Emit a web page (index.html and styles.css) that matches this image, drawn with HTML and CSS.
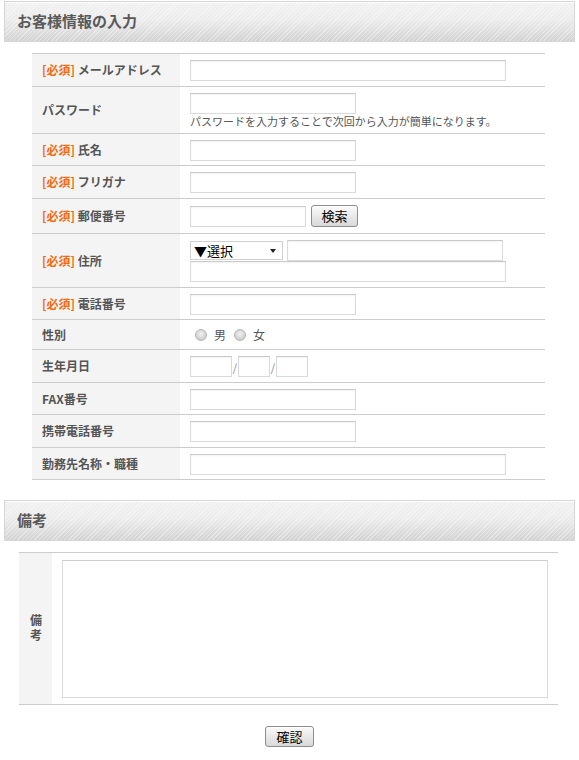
FILE: index.html
```html
<html>

<head>
    <title>お客様情報の入力</title>
    <meta charset="utf-8">
    <link rel="stylesheet" href="styles.css">
</head>

<body>
    <h2 class="sec-head">お客様情報の入力</h2>
    <table class="form-table">
        <tr>
            <th><span class="req">[必須]</span> メールアドレス</th>
            <td><input type="text" class="txt long"></td>
        </tr>
        <tr>
            <th>パスワード</th>
            <td>
                <input type="password" class="txt short">
                <p class="note">パスワードを入力することで次回から入力が簡単になります。</p>
            </td>
        </tr>
        <tr class="tight">
            <th><span class="req">[必須]</span> 氏名</th>
            <td><input type="text" class="txt short"></td>
        </tr>
        <tr>
            <th><span class="req">[必須]</span> フリガナ</th>
            <td><input type="text" class="txt short"></td>
        </tr>
        <tr class="zip-row">
            <th><span class="req">[必須]</span> 郵便番号</th>
            <td>
                <div class="line">
                    <input type="text" class="txt zip">
                    <button class="btn btn-search">検索</button>
                </div>
            </td>
        </tr>
        <tr>
            <th><span class="req">[必須]</span> 住所</th>
            <td>
                <div class="line gap4">
                    <span class="select-wrap"><select class="pref"><option>▼選択</option></select></span>
                    <input type="text" class="txt addr1">
                </div>
                <input type="text" class="txt long">
            </td>
        </tr>
        <tr class="tight">
            <th><span class="req">[必須]</span> 電話番号</th>
            <td><input type="text" class="txt short"></td>
        </tr>
        <tr>
            <th>性別</th>
            <td>
                <div class="radios">
                    <label><input type="radio" name="sex">男</label>
                    <label><input type="radio" name="sex">女</label>
                </div>
            </td>
        </tr>
        <tr>
            <th>生年月日</th>
            <td>
                <div class="line">
                    <input type="text" class="txt year">
                    <span class="slash">/</span>
                    <input type="text" class="txt md">
                    <span class="slash">/</span>
                    <input type="text" class="txt md">
                </div>
            </td>
        </tr>
        <tr class="tight">
            <th>FAX番号</th>
            <td><input type="text" class="txt short"></td>
        </tr>
        <tr>
            <th>携帯電話番号</th>
            <td><input type="text" class="txt short"></td>
        </tr>
        <tr class="tight">
            <th>勤務先名称・職種</th>
            <td><input type="text" class="txt long"></td>
        </tr>
    </table>

    <h2 class="sec-head sec-head2">備考</h2>
    <table class="note-table">
        <tr>
            <th><span class="vert">備考</span></th>
            <td><textarea class="memo"></textarea></td>
        </tr>
    </table>

    <div class="actions">
        <button class="btn btn-confirm">確認</button>
    </div>
</body>

</html>
```

FILE: styles.css
```css
body {
    margin: 0;
    padding: 1px 4px 0;
    font-family: "Noto Sans CJK JP", "DejaVu Sans", sans-serif;
    color: #555;
    background-color: #fff;
}

.sec-head {
    margin: 0;
    height: 41px;
    box-sizing: border-box;
    padding: 10px 12px 0;
    font-size: 15px;
    line-height: 18px;
    font-weight: bold;
    color: #5a5a5a;
    border: 1px solid #d6d6d6;
    box-shadow: inset 0 1px 0 #fff;
    background-color: #e6e6e6;
    background-image:
        repeating-linear-gradient(-45deg, rgba(255, 255, 255, 0.35) 0, rgba(255, 255, 255, 0.35) 1px, transparent 1px, transparent 3px),
        linear-gradient(#f1f1f1 0%, #ececec 45%, #d2d2d2 100%);
}

.sec-head2 {
    margin-top: 20px;
}

table {
    border-collapse: collapse;
    border-top: 1px solid #ccc;
}

th,
td {
    border-bottom: 1px solid #ccc;
    font-size: 12px;
}

th {
    background-color: #f4f4f4;
    text-align: left;
    font-weight: bold;
    color: #555;
    vertical-align: middle;
    white-space: nowrap;
}

.form-table {
    width: 513px;
    margin: 11px 0 0 28px;
}

.form-table th {
    width: 138px;
    padding: 0 0 0 10px;
    line-height: 16px;
}

.form-table td {
    padding: 6px 10px 5px;
    vertical-align: top;
    line-height: 16px;
}

.form-table .tight td {
    padding-bottom: 4px;
}

.form-table .zip-row td {
    padding-top: 6px;
    padding-bottom: 6px;
}

.req {
    color: #f26a10;
}

.txt {
    display: block;
    box-sizing: border-box;
    height: 21px;
    margin: 0;
    padding: 1px 3px;
    border: 1px solid #dadada;
    border-top-color: #c9c9c9;
    box-shadow: inset 0 1px 2px rgba(0, 0, 0, 0.05);
    background: #fff;
    font-size: 12px;
}

.long {
    width: 316px;
}

.short {
    width: 166px;
}

.zip {
    width: 116px;
}

.addr1 {
    width: 216px;
}

.year {
    width: 42px;
}

.md {
    width: 32px;
}

.note {
    margin: 0;
    font-size: 11px;
    line-height: 14px;
    color: #555;
    white-space: nowrap;
}

.line {
    display: flex;
    align-items: center;
}

.gap4 {
    gap: 4px;
}

.select-wrap {
    position: relative;
    display: block;
    width: 93px;
    height: 19px;
}

.select-wrap:after {
    content: "";
    position: absolute;
    right: 7px;
    top: 8px;
    border: 3px solid transparent;
    border-top: 4px solid #222;
    pointer-events: none;
}

.pref {
    -webkit-appearance: none;
    appearance: none;
    display: block;
    box-sizing: border-box;
    width: 93px;
    height: 19px;
    margin: 0;
    padding: 0 0 0 3px;
    border: 1px solid #d0d0d0;
    border-radius: 0;
    background: #fff;
    color: #000;
    font-family: "Noto Sans CJK JP", sans-serif;
    font-size: 13px;
    line-height: 17px;
}

.radios {
    display: flex;
    align-items: center;
    height: 18px;
}

.radios label {
    display: flex;
    align-items: center;
    margin-right: 3px;
    font-size: 12px;
    line-height: 16px;
    color: #555;
}

.radios input {
    -webkit-appearance: none;
    appearance: none;
    width: 12px;
    height: 12px;
    margin: 0 7px 0 5px;
    border: 1px solid #b8b8b8;
    border-radius: 50%;
    background: radial-gradient(circle at 50% 40%, #f2f2f2 0%, #d6d6d6 55%, #b9b9b9 100%);
    box-sizing: border-box;
}

.slash {
    width: 6px;
    text-align: center;
    font-size: 11px;
    color: #888;
}

.btn {
    box-sizing: border-box;
    margin: 0;
    padding: 0;
    border: 1px solid #8d8d8d;
    border-radius: 3px;
    background: linear-gradient(#fbfbfb, #e9e9e9 50%, #d9d9d9);
    box-shadow: inset 0 1px 0 #fff;
    color: #000;
    font-family: "Noto Sans CJK JP", sans-serif;
    font-size: 13px;
    font-weight: normal;
    line-height: 18px;
}

.btn-search {
    width: 47px;
    height: 22px;
    margin-left: 5px;
}

.note-table {
    width: 539px;
    margin: 11px 0 0 15px;
}

.note-table th {
    width: 33px;
    padding: 0;
    text-align: center;
}

.vert {
    display: inline-block;
    writing-mode: vertical-rl;
    letter-spacing: 3px;
    line-height: 14px;
}

.note-table td {
    padding: 7px 10px 6px;
}

.memo {
    display: block;
    box-sizing: border-box;
    width: 100%;
    height: 138px;
    margin: 0;
    border: 1px solid #dadada;
    border-top-color: #cdcdcd;
    resize: none;
}

.actions {
    display: flex;
    justify-content: center;
    padding-top: 21px;
}

.btn-confirm {
    width: 49px;
    height: 21px;
}
```
